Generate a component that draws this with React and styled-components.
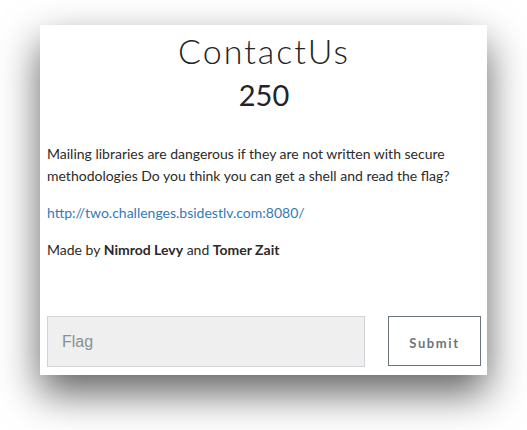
import React from 'react'
import styled, { createGlobalStyle } from 'styled-components';

const Global = createGlobalStyle`
body {
  margin: 0;
  background: #FFFFFF;
  font-family: 'Lato', sans-serif;
}
`;

const Page = styled.div`
padding : 25px 40px 55px 40px;
`;

const Card = styled.div`
width : 447px;
height: 350px;
box-sizing : border-box;
background: #FFFFFF;
box-shadow: 0 18px 38px rgba(0,0,0,0.62);
padding : 4px 6px 8px 7px;
display : flex;
flex-direction: column;
`;

const Title = styled.div`
font-family: 'Lato', sans-serif;
font-weight: 300;
font-size: 34px;
line-height: 44px;
letter-spacing: 2px;
text-align: center;
color: #222426;
`;

const Points = styled.div`
font-family: 'Lato', sans-serif;
font-weight: 400;
font-size: 29px;
line-height: 44px;
text-align: center;
color: #222426;
margin-bottom : 26px;
`;

const Text = styled.p`
font-family: 'Lato', sans-serif;
font-size: 14px;
line-height: 22px;
color: #2b2b2b;
margin : 0 0 15px 0;
b{
  font-weight: 700;
}
`;

const Link = styled.a`
color: #337ab7;
text-decoration: none;
`;

const Form = styled.div`
margin-top : auto;
display : flex;
flex-direction : row;
justify-content : space-between;
align-items : flex-start;
`;

const Input = styled.input`
width : 318px;
height: 51px;
box-sizing : border-box;
background: #EFEFEF;
border: 1px solid #D0D4D9;
padding : 0 14px;
font-family: 'Liberation Sans', sans-serif;
font-size: 16px;
color: #555;
outline: none;
&::placeholder{
  color: #8a8f94;
}
`;

const Button = styled.button`
width : 93px;
height: 50px;
box-sizing : border-box;
background: #FFFFFF;
border: 1px solid #6c757d;
font-family: 'Lato', sans-serif;
font-weight: 700;
font-size: 13px;
letter-spacing: 1.6px;
color: #6c757d;
padding : 4px 0 0 0;
`;

export default function App() {
  return (
    <>
    <Global/>
    <Page>
      <Card>
        <Title>ContactUs</Title>
        <Points>250</Points>
        <Text>Mailing libraries are dangerous if they are not written with secure methodologies Do you think you can get a shell and read the flag?</Text>
        <Text><Link href="#">http://two.challenges.bsidestlv.com:8080/</Link></Text>
        <Text>Made by <b>Nimrod Levy</b> and <b>Tomer Zait</b></Text>
        <Form>
          <Input placeholder="Flag"/>
          <Button>Submit</Button>
        </Form>
      </Card>
    </Page>
    </>
  )
}
